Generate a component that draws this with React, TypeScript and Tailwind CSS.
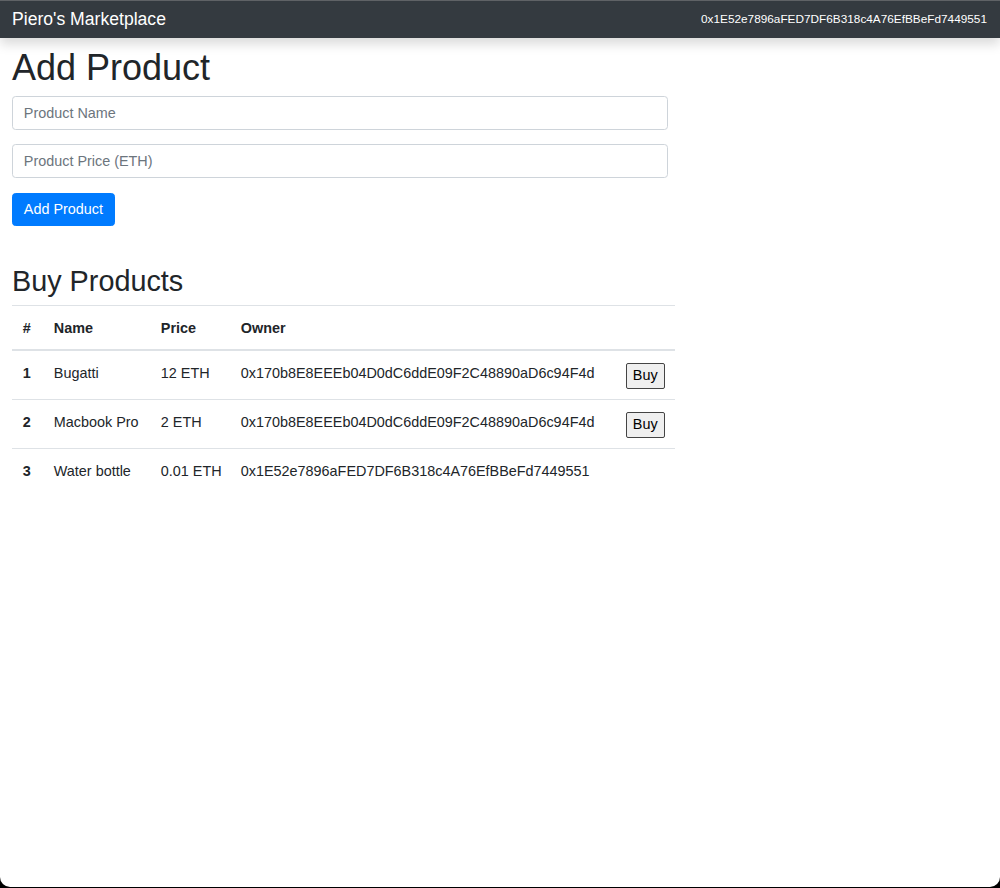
import { useState } from 'react'

type Product = {
  id: number
  name: string
  price: string
  owner: string
  purchased: boolean
}

const account = '0x1E52e7896aFED7DF6B318c4A76EfBBeFd7449551'

const products: Product[] = [
  { id: 1, name: 'Bugatti', price: '12', owner: '0x170b8E8EEEb04D0dC6ddE09F2C48890aD6c94F4d', purchased: false },
  { id: 2, name: 'Macbook Pro', price: '2', owner: '0x170b8E8EEEb04D0dC6ddE09F2C48890aD6c94F4d', purchased: false },
  { id: 3, name: 'Water bottle', price: '0.01', owner: account, purchased: false },
]

export default function App() {
  const [name, setName] = useState('')
  const [price, setPrice] = useState('')

  return (
    <div className="h-[888px] bg-black flex flex-col font-['Liberation_Sans',Arial,sans-serif] text-[#212529]">
      <div className="flex-1 mb-px bg-white rounded-b-[10px] overflow-hidden flex flex-col">
        {/* Navbar */}
        <nav className="relative z-10 h-[38px] shrink-0 bg-[#343a40] border-t border-[#5f6266] shadow-[0_6px_12px_rgba(0,0,0,0.15)] flex items-center justify-between">
          <span className="pl-3 text-[17.6px] text-white leading-none">Piero's Marketplace</span>
          <small className="pr-[13px] text-[11.8px] text-white">{account}</small>
        </nav>

        {/* Content */}
        <div className="px-3 pt-[7.6px]">
          <div className="w-[663px]">
            <h1 className="text-[36px] leading-[43.2px] font-medium mb-[7.2px]">Add Product</h1>
            <form onSubmit={(e) => e.preventDefault()} className="mr-[7.2px]">
              <div className="mb-[14.4px]">
                <input
                  type="text"
                  value={name}
                  onChange={(e) => setName(e.target.value)}
                  placeholder="Product Name"
                  className="w-full h-[34px] border border-[#ced4da] rounded-[3.6px] px-[10.8px] text-[14.4px] placeholder:text-[#6c757d] focus:outline-none"
                />
              </div>
              <div className="mb-[14.4px]">
                <input
                  type="text"
                  value={price}
                  onChange={(e) => setPrice(e.target.value)}
                  placeholder="Product Price (ETH)"
                  className="w-full h-[34px] border border-[#ced4da] rounded-[3.6px] px-[10.8px] text-[14.4px] placeholder:text-[#6c757d] focus:outline-none"
                />
              </div>
              <button
                type="submit"
                className="h-[33.6px] px-[10.8px] bg-[#007bff] border border-[#007bff] text-white text-[14.4px] leading-[21.6px] rounded-[3.6px]"
              >
                Add Product
              </button>
            </form>

            <p className="h-[21.6px] mb-[16.4px]">&nbsp;</p>

            <h2 className="text-[28.8px] leading-[34.56px] font-medium mb-[6.2px]">Buy Products</h2>
            <table className="w-full table-fixed text-[14.4px] leading-[21.6px] border-collapse">
              <colgroup>
                <col className="w-[31px]" />
                <col className="w-[107px]" />
                <col className="w-[80px]" />
                <col className="w-[385px]" />
                <col />
              </colgroup>
              <thead>
                <tr className="border-t border-[#dee2e6] border-b-2">
                  <th className="text-left pt-[11.8px] pb-[9.8px] px-[10.8px] font-bold">#</th>
                  <th className="text-left pt-[11.8px] pb-[9.8px] px-[10.8px] font-bold">Name</th>
                  <th className="text-left pt-[11.8px] pb-[9.8px] px-[10.8px] font-bold">Price</th>
                  <th className="text-left pt-[11.8px] pb-[9.8px] px-[10.8px] font-bold">Owner</th>
                  <th className="pt-[11.8px] pb-[9.8px] px-[10.8px]"></th>
                </tr>
              </thead>
              <tbody>
                {products.map((product, i) => (
                  <tr key={product.id} className={i > 0 ? 'border-t border-[#dee2e6]' : ''}>
                    <th className="text-left align-top pt-[11.8px] pb-[9.8px] px-[10.8px] font-bold">{product.id}</th>
                    <td className="align-top pt-[11.8px] pb-[9.8px] px-[10.8px] whitespace-nowrap">{product.name}</td>
                    <td className="align-top pt-[11.8px] pb-[9.8px] px-[10.8px] whitespace-nowrap">{product.price} ETH</td>
                    <td className="align-top pt-[11.8px] pb-[9.8px] px-[10.8px] whitespace-nowrap">{product.owner}</td>
                    <td className="align-top pt-[11.8px] pb-[10px] px-[10.8px]">
                      {product.owner !== account && !product.purchased ? (
                        <button className="block h-[26px] px-[6px] border border-[#444] bg-[#efefef] rounded-[2px] text-[14.4px] leading-[21.6px] text-black">
                          Buy
                        </button>
                      ) : null}
                    </td>
                  </tr>
                ))}
              </tbody>
            </table>
          </div>
        </div>
      </div>
    </div>
  )
}
